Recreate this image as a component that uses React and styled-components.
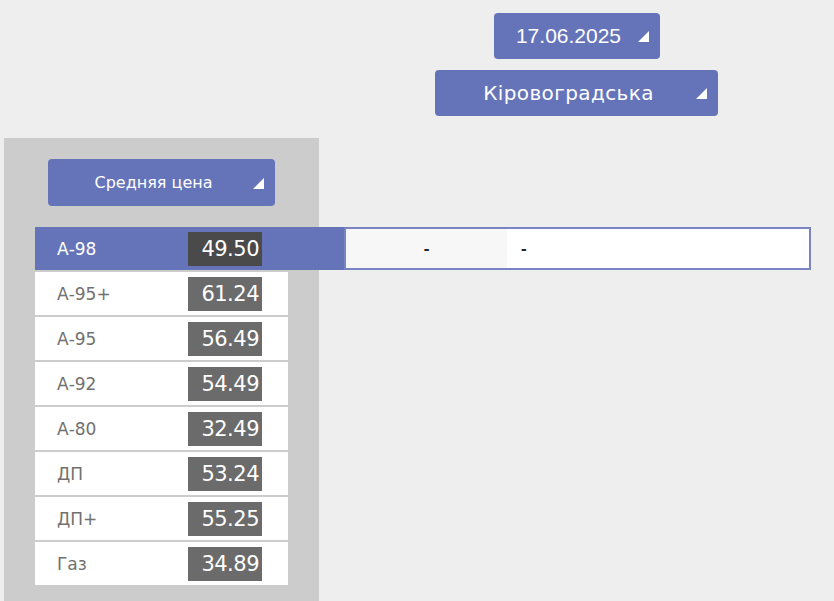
import React, { useState } from 'react';
import styled, { createGlobalStyle } from 'styled-components';

const FUELS = [
  { name: 'А-98', price: '49.50' },
  { name: 'А-95+', price: '61.24' },
  { name: 'А-95', price: '56.49' },
  { name: 'А-92', price: '54.49' },
  { name: 'А-80', price: '32.49' },
  { name: 'ДП', price: '53.24' },
  { name: 'ДП+', price: '55.25' },
  { name: 'Газ', price: '34.89' },
];

const GlobalStyle = createGlobalStyle`
  html, body {
    margin: 0;
    padding: 0;
    background: #eeeeee;
    font-family: "Liberation Sans", Arial, sans-serif;
    overflow: hidden;
  }
`;

function App() {
  const [active, setActive] = useState(0);

  return (
    <>
      <GlobalStyle />
      <Page>
        <Header>
          <DropButton $width={166} $size={21}>17.06.2025</DropButton>
          <DropButton $width={283} $size={20} $gothic $spacing={0.4}>
            Кіровоградська
          </DropButton>
        </Header>
        <Panel>
          <DropButton $width={227} $size={16} $gothic $offset={44} $tall>
            Средняя цена
          </DropButton>
          <FuelList>
            {FUELS.map((el, idx) => {
              const isActive = idx === active;
              return (
                <FuelRow
                  key={el.name}
                  $active={isActive}
                  onClick={() => setActive(idx)}
                >
                  <FuelName $active={isActive}>{el.name}</FuelName>
                  <Price $active={isActive}>{el.price}</Price>
                  {isActive && (
                    <Details>
                      <DetailCell $shade>-</DetailCell>
                      <DetailCell>-</DetailCell>
                    </Details>
                  )}
                </FuelRow>
              );
            })}
          </FuelList>
        </Panel>
      </Page>
    </>
  );
}

export default App;

const Page = styled.div`
  display: grid;
  grid-template-columns: 315px 1fr;
  row-gap: 22px;
  padding-left: 4px;
  width: 834px;
  height: 601px;
  box-sizing: border-box;
`;

const Header = styled.div`
  grid-column: 2;
  display: flex;
  flex-direction: column;
  align-items: center;
  gap: 11px;
  padding-top: 13px;
`;

const DropButton = styled.div`
  position: relative;
  width: ${p => p.$width}px;
  height: ${p => (p.$tall ? 47 : 46)}px;
  margin-left: ${p => p.$offset || 0}px;
  box-sizing: border-box;
  padding-right: 16px;
  border-radius: 4px;
  background: #6574b9;
  color: #ffffff;
  font-family: ${p =>
    p.$gothic ? '"DejaVu Sans", sans-serif' : '"Liberation Sans", Arial, sans-serif'};
  font-size: ${p => p.$size}px;
  letter-spacing: ${p => p.$spacing || 0}px;
  display: flex;
  align-items: center;
  justify-content: center;
  cursor: pointer;

  &::after {
    content: '';
    position: absolute;
    right: 11px;
    top: 50%;
    margin-top: -5px;
    border-style: solid;
    border-width: 0 0 11px 11px;
    border-color: transparent transparent #ffffff transparent;
  }
`;

const Panel = styled.div`
  grid-column: 1;
  background: #cccccc;
  padding: 21px 0 17px 0;
  min-height: 463px;
  box-sizing: border-box;
`;

const FuelList = styled.div`
  display: flex;
  flex-direction: column;
  align-items: flex-start;
  gap: 2px;
  margin: 21px 0 0 31px;
`;

const FuelRow = styled.div`
  display: flex;
  align-items: center;
  width: ${p => (p.$active ? 'max-content' : '253px')};
  height: 43px;
  background: ${p => (p.$active ? '#6574b9' : '#ffffff')};
  cursor: pointer;
`;

const FuelName = styled.div`
  width: 153px;
  box-sizing: border-box;
  padding-left: 22px;
  font-family: "DejaVu Sans", sans-serif;
  font-size: 17px;
  color: ${p => (p.$active ? '#ffffff' : '#717171')};
`;

const Price = styled.div`
  width: 74px;
  height: 34px;
  box-sizing: border-box;
  padding-right: 3px;
  background: ${p => (p.$active ? '#4a4a4a' : '#6b6b6b')};
  color: #ffffff;
  font-family: "DejaVu Sans", sans-serif;
  font-size: 21px;
  letter-spacing: -0.5px;
  display: flex;
  align-items: center;
  justify-content: flex-end;
`;

const Details = styled.div`
  display: flex;
  width: 467px;
  height: 43px;
  margin-left: 82px;
  box-sizing: border-box;
  border: 2px solid #7a84c3;
  background: #ffffff;
`;

const DetailCell = styled.div`
  display: flex;
  align-items: center;
  justify-content: ${p => (p.$shade ? 'center' : 'flex-start')};
  width: ${p => (p.$shade ? '161px' : 'auto')};
  flex: ${p => (p.$shade ? 'none' : '1')};
  padding-left: ${p => (p.$shade ? '0' : '14px')};
  background: ${p => (p.$shade ? '#f7f7f7' : '#ffffff')};
  color: #222222;
  font-size: 17px;
  font-weight: bold;
`;
